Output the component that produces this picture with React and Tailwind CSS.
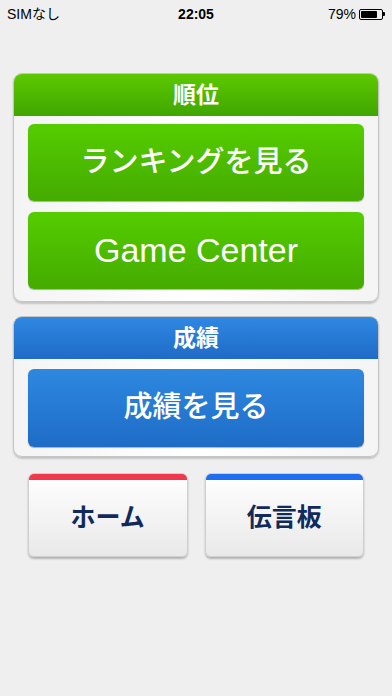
export default function App() {
  return (
    <div
      className="min-h-[696px] w-full bg-[#efefef] text-black"
      style={{ fontFamily: '"Liberation Sans", "Noto Sans CJK JP", sans-serif' }}
    >
      {/* STATUS BAR */}
      <div className="relative flex h-7 items-center justify-between px-[7px] text-[14px]">
        <span>SIMなし</span>
        <span className="absolute left-1/2 -translate-x-1/2 font-bold">22:05</span>
        <div className="flex items-center gap-[3px]">
          <span>79%</span>
          <div className="flex items-center">
            <div className="h-[11px] w-[24px] rounded-[2px] border border-black p-[1px]">
              <div className="h-full w-[79%] rounded-[1px] bg-black" />
            </div>
            <div className="h-[4px] w-[2px] rounded-r-[1px] bg-black" />
          </div>
        </div>
      </div>

      <div className="flex flex-col px-[13px] pt-[45px]">
        {/* RANKING CARD */}
        <div className="overflow-hidden rounded-[9px] border border-[#c5c5c5] bg-gradient-to-r from-[#f4f4f4] via-white to-[#f4f4f4] shadow-[0_2px_2px_rgba(0,0,0,0.18)]">
          <div className="flex h-[42px] items-center justify-center bg-gradient-to-b from-[#5cc900] to-[#3fa600] text-[23px] font-bold text-white">
            順位
          </div>
          <div className="flex flex-col gap-[11px] px-[14px] pt-[8px] pb-[12px]">
            <button className="flex h-[77px] items-center justify-center rounded-[6px] bg-gradient-to-b from-[#55cd00] to-[#45ab00] text-[29px] font-medium text-white shadow-[0_1px_1px_rgba(0,0,0,0.3)]">
              ランキングを見る
            </button>
            <button className="flex h-[77px] items-center justify-center rounded-[6px] bg-gradient-to-b from-[#55cd00] to-[#45ab00] text-[34px] text-white shadow-[0_1px_1px_rgba(0,0,0,0.3)]">
              Game Center
            </button>
          </div>
        </div>

        {/* RESULTS CARD */}
        <div className="mt-[14px] overflow-hidden rounded-[9px] border border-[#c5c5c5] bg-gradient-to-r from-[#f4f4f4] via-white to-[#f4f4f4] shadow-[0_2px_2px_rgba(0,0,0,0.18)]">
          <div className="flex h-[42px] items-center justify-center bg-gradient-to-b from-[#2f88e2] to-[#1f6bc6] text-[23px] font-bold text-white">
            成績
          </div>
          <div className="px-[14px] pt-[10px] pb-[9px]">
            <button className="flex h-[78px] w-full items-center justify-center rounded-[6px] bg-gradient-to-b from-[#2e88e0] to-[#1e6cc6] text-[29px] font-medium text-white shadow-[0_1px_1px_rgba(0,0,0,0.3)]">
              成績を見る
            </button>
          </div>
        </div>

        {/* BOTTOM BUTTONS */}
        <div className="mt-[16px] grid grid-cols-2 gap-[17px] px-[15px]">
          {[
            { label: "ホーム", bar: "bg-[#f0384d]" },
            { label: "伝言板", bar: "bg-[#1f6ef0]" },
          ].map((b) => (
            <button
              key={b.label}
              className="flex h-[84px] flex-col overflow-hidden rounded-[6px] border border-[#cfcfcf] bg-gradient-to-b from-white to-[#e9e9e9] shadow-[0_2px_2px_rgba(0,0,0,0.25)]"
            >
              <div className={`h-[6px] w-full ${b.bar}`} />
              <div className="flex flex-1 items-center justify-center text-[25px] font-bold text-[#112a5c]">
                {b.label}
              </div>
            </button>
          ))}
        </div>
      </div>
    </div>
  );
}
